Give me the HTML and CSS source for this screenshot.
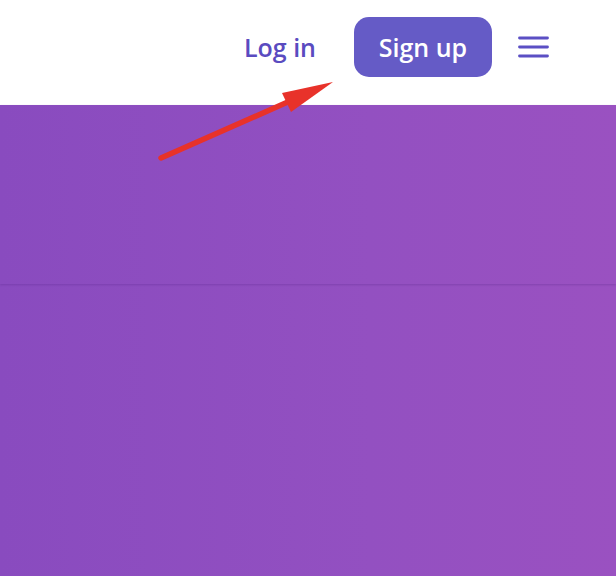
FILE: index.html
```html
<!DOCTYPE html>
<html>
<head>
<meta charset="utf-8">
<link rel="stylesheet" href="styles.css">
</head>
<body>
<header class="header">
  <nav class="nav">
    <a class="login" href="#">Log in</a>
    <a class="signup" href="#">Sign up</a>
    <button class="menu" aria-label="Menu">
      <svg width="31" height="22" viewBox="0 0 31 22"><g stroke="#5b4fc4" stroke-width="2.8" stroke-linecap="round"><line x1="1.5" y1="2" x2="29.5" y2="2"/><line x1="1.5" y1="11" x2="29.5" y2="11"/><line x1="1.5" y1="20" x2="29.5" y2="20"/></g></svg>
    </button>
  </nav>
</header>
<main>
  <section class="hero"></section>
  <section class="band"></section>
</main>
<svg class="arrow" width="616" height="200" viewBox="0 0 616 200">
  <line x1="161" y1="158" x2="290" y2="101" stroke="#e8322a" stroke-width="5.5" stroke-linecap="round"/>
  <polygon points="333,82 282,93 291,112" fill="#e8322a"/>
</svg>
</body>
</html>
```
FILE: styles.css
```css
* { box-sizing: border-box; }
html, body { margin: 0; padding: 0; }
body {
  width: 616px;
  height: 576px;
  overflow: hidden;
  font-family: "Open Sans", "Noto Sans", sans-serif;
  background: #8f4ec0;
  position: relative;
}
.header {
  height: 105px;
  background: #fff;
}
.nav {
  height: 100%;
  display: flex;
  align-items: center;
  justify-content: flex-end;
  padding-right: 67px;
  padding-bottom: 14px;
  padding-top: 2px;
}
.login {
  font-size: 25px;
  font-weight: 600;
  color: #5a4bc0;
  text-decoration: none;
  margin-right: 38px;
}
.signup {
  display: flex;
  align-items: center;
  justify-content: center;
  width: 138px;
  height: 60px;
  border-radius: 15px;
  background: #655bc6;
  color: #fff;
  font-size: 25px;
  font-weight: 600;
  text-decoration: none;
  margin-right: 26px;
}
.menu {
  border: 0;
  background: none;
  padding: 0;
  display: flex;
}
.hero {
  height: 179px;
  background: linear-gradient(90deg, #894bbf 0%, #9350c1 60%, #9a51c1 100%);
  box-shadow: 0 1px 2px rgba(90, 40, 140, 0.35);
  position: relative;
}
.band {
  height: 292px;
  background: linear-gradient(90deg, #894bbf 0%, #9350c1 60%, #9a51c1 100%);
}
.arrow {
  position: absolute;
  left: 0;
  top: 0;
}
```
